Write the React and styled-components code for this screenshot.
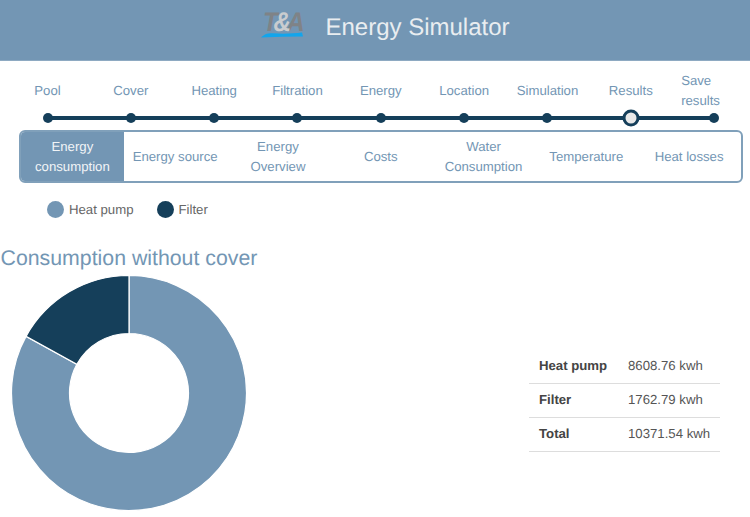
import React from 'react';
import styled, { createGlobalStyle } from 'styled-components';

const GlobalStyle = createGlobalStyle`
	html, body {
		margin: 0;
		background: #fff;
		font-family: "Liberation Sans", Arial, sans-serif;
		text-rendering: geometricPrecision;
		overflow: hidden;
	}
`;

const blue = '#7396b4';
const navy = '#153f5a';

const Page = styled.div`
	width: 750px;
	height: 517px;
	overflow: hidden;
`;

const Header = styled.header`
	height: 56px;
	padding: 0 0 4px 21px;
	background-color: ${blue};
	border-bottom: 1px solid #8eaac2;
	display: flex;
	align-items: center;
	justify-content: center;
	gap: 20px;
`;

const Logo = styled.div`
	width: 44px;
	height: 26px;
	position: relative;
	margin-bottom: 6px;

	svg {
		position: absolute;
		left: 0;
		bottom: 0;
	}
`;

const LogoText = styled.span`
	position: absolute;
	left: 2px;
	top: -3px;
	font-size: 27px;
	line-height: 27px;
	font-weight: 700;
	font-style: italic;
	letter-spacing: -4.7px;
	color: #7f8387;
	white-space: nowrap;
	transform: scaleX(0.9);
	transform-origin: left center;

	b {
		position: relative;
		z-index: 1;
		color: #c9cccf;
	}
`;

const Title = styled.h1`
	margin: 0;
	font-size: 24px;
	font-weight: 400;
	color: #e9edf0;
`;

const Steps = styled.ol`
	list-style: none;
	margin: 0;
	padding: 0 0 0 12.5px;
	display: grid;
	grid-template-columns: repeat(9, 70px);
	column-gap: 13.33px;
`;

const Step = styled.li`
	display: flex;
	flex-direction: column;
	align-items: center;
	height: 48px;
	padding-top: 10px;
	position: relative;
	font-size: 13.2px;
	line-height: 20px;
	text-align: center;
	color: ${blue};

	&:not(:last-child)::after {
		content: '';
		position: absolute;
		left: 50%;
		bottom: -1px;
		width: 83.33px;
		height: 4px;
		background: ${navy};
	}
`;

const StepLabel = styled.span`
	display: flex;
	align-items: center;
	height: 40px;
	${p => p.$wrapLeft && `
		width: 39px;
		margin-right: 27px;
		text-align: left;
	`}
`;

const Dot = styled.span`
	position: absolute;
	left: 50%;
	bottom: 1px;
	transform: translate(-50%, 50%);
	z-index: 1;
	box-sizing: border-box;
	border-radius: 50%;
	width: ${p => (p.$current ? '17px' : '10px')};
	height: ${p => (p.$current ? '17px' : '10px')};
	background: ${p => (p.$current ? '#e9e9e9' : navy)};
	border: ${p => (p.$current ? `3px solid ${navy}` : 'none')};
`;

const Tabs = styled.nav`
	margin: 11px 7.5px 0 19px;
	height: 53px;
	box-sizing: border-box;
	border: 2px solid #80a0ba;
	border-radius: 6px;
	display: grid;
	grid-template-columns: repeat(7, 1fr);
	overflow: hidden;
`;

const Tab = styled.div`
	display: flex;
	align-items: center;
	justify-content: center;
	text-align: center;
	font-size: 13.2px;
	line-height: 20px;
	padding: 0 4px;
	color: ${p => (p.$active ? '#f1f4f7' : blue)};
	background: ${p => (p.$active ? blue : 'transparent')};
`;

const Legend = styled.div`
	display: flex;
	align-items: center;
	gap: 23px;
	margin: 17px 0 0 47px;
	height: 18px;
`;

const LegendItem = styled.div`
	display: flex;
	align-items: center;
	gap: 5px;
	font-size: 13.2px;
	color: #666;
`;

const Swatch = styled.span`
	width: 17px;
	height: 17px;
	border-radius: 50%;
	background: ${p => p.$color};
`;

const Heading = styled.h2`
	margin: 28px 0 0 0.5px;
	font-size: 21.3px;
	line-height: 25px;
	font-weight: 400;
	color: ${blue};
`;

const Body = styled.section`
	display: flex;
	align-items: center;
	justify-content: space-between;
	padding: 4px 30px 0 10.5px;
`;

const Donut = styled.svg`
	display: block;
	width: 236px;
	height: 236px;
`;

const Table = styled.table`
	width: 191px;
	border-collapse: collapse;
	font-size: 13.2px;
	color: #555;
	margin-top: 16px;

	th, td {
		height: 34px;
		box-sizing: border-box;
		padding: 0 0 2px 10px;
		border-bottom: 1px solid #ddd;
		text-align: left;
	}

	th {
		width: 89px;
		font-weight: 700;
		color: #444;
	}
`;

const steps = ['Pool', 'Cover', 'Heating', 'Filtration', 'Energy', 'Location', 'Simulation', 'Results', 'Save results'];
const tabs = ['Energy consumption', 'Energy source', 'Energy Overview', 'Costs', 'Water Consumption', 'Temperature', 'Heat losses'];
const rows = [
	['Heat pump', '8608.76 kwh'],
	['Filter', '1762.79 kwh'],
	['Total', '10371.54 kwh'],
];

// slice of a ring, angles in degrees clockwise from the top
const slicePath = (from, to, r, inner) => {
	const pt = (rad, a) => {
		const t = (a * Math.PI) / 180;
		return `${(118 + rad * Math.sin(t)).toFixed(2)} ${(118 - rad * Math.cos(t)).toFixed(2)}`;
	};
	const large = to - from > 180 ? 1 : 0;
	return `M${pt(r, from)} A${r} ${r} 0 ${large} 1 ${pt(r, to)} L${pt(inner, to)} A${inner} ${inner} 0 ${large} 0 ${pt(inner, from)} Z`;
};

const split = (8608.76 / 10371.54) * 360;

const App = () => (
	<Page>
		<GlobalStyle />
		<Header>
			<Logo>
				<LogoText>T<b>&amp;</b>A</LogoText>
				<svg width="44" height="6" viewBox="0 0 44 6">
					<path d="M0 5.5 C3 2.5 6 1 12 1.2 C22 2.2 32 1.5 41 0.5 L42 4.5 C28 4.5 14 5 0 5.5 Z" fill="#12a5ec" />
				</svg>
			</Logo>
			<Title>Energy Simulator</Title>
		</Header>
		<Steps>
			{steps.map((s, i) => (
				<Step key={s}>
					<StepLabel $wrapLeft={i === steps.length - 1}>{s}</StepLabel>
					<Dot $current={s === 'Results'} />
				</Step>
			))}
		</Steps>
		<Tabs>
			{tabs.map((t, i) => (
				<Tab key={t} $active={i === 0}>{t}</Tab>
			))}
		</Tabs>
		<Legend>
			<LegendItem><Swatch $color={blue} />Heat pump</LegendItem>
			<LegendItem><Swatch $color={navy} />Filter</LegendItem>
		</Legend>
		<Heading>Consumption without cover</Heading>
		<Body>
			<Donut viewBox="0 0 236 236">
				<path d={slicePath(0, split, 117.5, 59.5)} fill={blue} stroke="#fff" strokeWidth="1.2" />
				<path d={slicePath(split, 360, 117.5, 59.5)} fill={navy} stroke="#fff" strokeWidth="1.2" />
			</Donut>
			<Table>
				<tbody>
					{rows.map(([k, v]) => (
						<tr key={k}>
							<th>{k}</th>
							<td>{v}</td>
						</tr>
					))}
				</tbody>
			</Table>
		</Body>
	</Page>
);

export default App;
